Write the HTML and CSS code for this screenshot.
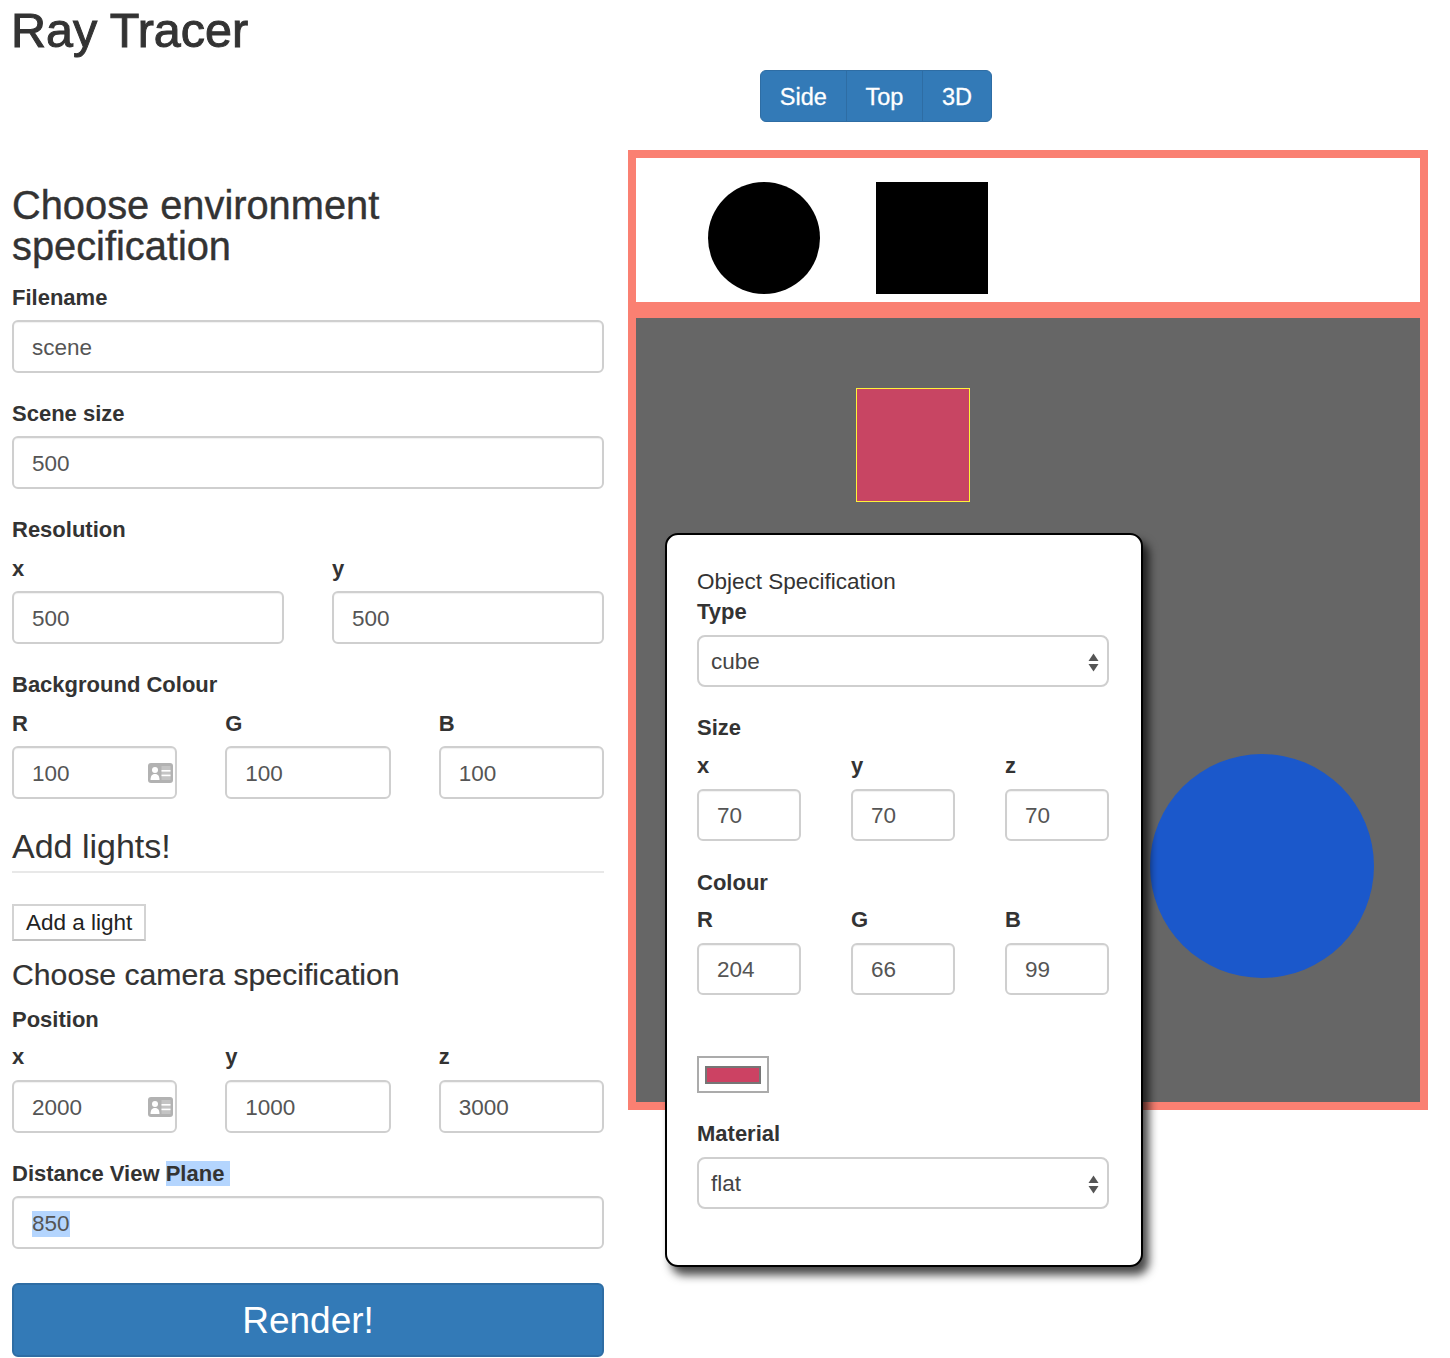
FILE: index.html
```html
<!DOCTYPE html>
<html lang="en">
<head>
<meta charset="utf-8">
<title>Ray Tracer</title>
<link rel="stylesheet" href="styles.css">
</head>
<body>
<div class="page">
  <h1 class="title">Ray Tracer</h1>
  <div class="main">
    <div class="left">
      <h2 class="env-heading">Choose environment specification</h2>

      <div class="group">
        <label class="lbl">Filename</label>
        <input class="field" value="scene">
      </div>

      <div class="group">
        <label class="lbl">Scene size</label>
        <input class="field" value="500">
      </div>

      <div class="group">
        <div class="lbl lbl-head">Resolution</div>
        <div class="cols cols-2">
          <div><div class="lbl">x</div><input class="field" value="500"></div>
          <div><div class="lbl">y</div><input class="field" value="500"></div>
        </div>
      </div>

      <div class="group">
        <div class="lbl lbl-head">Background Colour</div>
        <div class="cols cols-3">
          <div>
            <div class="lbl">R</div>
            <div class="field-wrap">
              <input class="field" value="100">
              <svg class="card-icon" viewBox="0 0 25 20" width="25" height="20"><rect x="0" y="0" width="25" height="20" rx="3" fill="#b2b2b2"/><circle cx="7" cy="7" r="3" fill="#fff"/><path d="M2.5 17 C2.5 12.5 4.5 11 7 11 C9.5 11 11.5 12.5 11.5 17 Z" fill="#fff"/><rect x="13.5" y="3" width="9" height="14" fill="#c4c4c4"/><rect x="13.5" y="7" width="9" height="1.6" fill="#fff"/><rect x="13.5" y="11.6" width="9" height="1.6" fill="#fff"/></svg>
            </div>
          </div>
          <div><div class="lbl">G</div><input class="field" value="100"></div>
          <div><div class="lbl">B</div><input class="field" value="100"></div>
        </div>
      </div>

      <h3 class="lights-heading">Add lights!</h3>
      <button class="add-light">Add a light</button>

      <h4 class="camera-heading">Choose camera specification</h4>

      <div class="group">
        <div class="lbl lbl-head-pos">Position</div>
        <div class="cols cols-3">
          <div>
            <div class="lbl lbl-sub">x</div>
            <div class="field-wrap">
              <input class="field" value="2000">
              <svg class="card-icon" viewBox="0 0 25 20" width="25" height="20"><rect x="0" y="0" width="25" height="20" rx="3" fill="#b2b2b2"/><circle cx="7" cy="7" r="3" fill="#fff"/><path d="M2.5 17 C2.5 12.5 4.5 11 7 11 C9.5 11 11.5 12.5 11.5 17 Z" fill="#fff"/><rect x="13.5" y="3" width="9" height="14" fill="#c4c4c4"/><rect x="13.5" y="7" width="9" height="1.6" fill="#fff"/><rect x="13.5" y="11.6" width="9" height="1.6" fill="#fff"/></svg>
            </div>
          </div>
          <div><div class="lbl lbl-sub">y</div><input class="field" value="1000"></div>
          <div><div class="lbl lbl-sub">z</div><input class="field" value="3000"></div>
        </div>
      </div>

      <div class="group group-last">
        <div class="lbl">Distance View <span class="sel">Plane&nbsp;</span></div>
        <div class="field field-div"><span class="sel">850</span></div>
      </div>

      <button class="render">Render!</button>
    </div>

    <div class="right">
      <div class="view-toggle">
        <button class="vt-btn">Side</button><button class="vt-btn">Top</button><button class="vt-btn">3D</button>
      </div>

      <div class="stage">
        <div class="canvas canvas-top">
          <div class="shape circle-top"></div>
          <div class="shape square-top"></div>
        </div>
        <div class="canvas canvas-main">
          <div class="shape cube"></div>
          <div class="shape sphere"></div>
        </div>

        <div class="popup">
          <div class="popup-title">Object Specification</div>
          <div class="lbl p-lbl">Type</div>
          <div class="select p-type">
            <span>cube</span>
            <svg class="arrows" viewBox="0 0 11 19" width="11" height="19"><path d="M0.5 8 L5.5 0.5 L10.5 8 Z" fill="#555"/><path d="M0.5 11 L5.5 18.5 L10.5 11 Z" fill="#555"/></svg>
          </div>

          <div class="lbl lbl-head-p">Size</div>
          <div class="cols cols-3 p-cols">
            <div><div class="lbl lbl-sub">x</div><input class="field p-field" value="70"></div>
            <div><div class="lbl lbl-sub">y</div><input class="field p-field" value="70"></div>
            <div><div class="lbl lbl-sub">z</div><input class="field p-field" value="70"></div>
          </div>

          <div class="lbl lbl-head-c">Colour</div>
          <div class="cols cols-3 p-cols p-cols-last">
            <div><div class="lbl lbl-sub">R</div><input class="field p-field" value="204"></div>
            <div><div class="lbl lbl-sub">G</div><input class="field p-field" value="66"></div>
            <div><div class="lbl lbl-sub">B</div><input class="field p-field" value="99"></div>
          </div>

          <div class="swatch"><div class="swatch-inner"></div></div>

          <div class="lbl p-lbl">Material</div>
          <div class="select">
            <span>flat</span>
            <svg class="arrows" viewBox="0 0 11 19" width="11" height="19"><path d="M0.5 8 L5.5 0.5 L10.5 8 Z" fill="#555"/><path d="M0.5 11 L5.5 18.5 L10.5 11 Z" fill="#555"/></svg>
          </div>
        </div>
      </div>
    </div>
  </div>
</div>
</body>
</html>
```

FILE: styles.css
```css
* {
  box-sizing: border-box;
}

body {
  margin: 0;
  font-family: "Liberation Sans", Arial, Helvetica, sans-serif;
  color: #333;
  background: #fff;
}

.page {
  padding: 0 12px;
}

.title {
  margin: 0 0 0 -1px;
  padding-top: 4px;
  font-size: 48.5px;
  line-height: 52px;
  font-weight: 400;
  -webkit-text-stroke: 1px #333;
}

.main {
  display: flex;
  gap: 24px;
  align-items: flex-start;
}

.left {
  width: 592px;
  flex: none;
  padding-top: 129px;
}

.right {
  width: 800px;
  flex: none;
  padding-top: 14px;
}

.env-heading {
  margin: 0 0 19px;
  max-width: 540px;
  font-size: 39.8px;
  line-height: 41px;
  font-weight: 400;
  -webkit-text-stroke: 0.4px #333;
}

.lbl {
  display: block;
  font-weight: 700;
  font-size: 22px;
  line-height: 24px;
  margin-bottom: 10px;
  color: #333;
}

.lbl-head {
  margin-bottom: 15px;
}

.lbl-head-pos {
  margin-bottom: 13px;
}

.lbl-sub {
  margin-bottom: 11px;
}

.p-lbl {
  margin-bottom: 11px;
}

.group {
  margin-bottom: 29px;
}

.group-last {
  margin-bottom: 0;
}

.field {
  display: block;
  width: 100%;
  height: 53px;
  border: 2px solid #cfcfcf;
  border-radius: 6px;
  padding: 2px 18px 0;
  font-family: inherit;
  font-size: 22.5px;
  color: #555;
  background: #fff;
  box-shadow: inset 0 1px 1px rgba(0, 0, 0, 0.06);
  outline: none;
}

.field-div {
  display: flex;
  align-items: center;
}

.sel {
  background: #b4d5fe;
}

.cols {
  display: grid;
  column-gap: 48px;
}

.cols-2 {
  grid-template-columns: 1fr 1fr;
}

.cols-3 {
  grid-template-columns: 1fr 1fr 1fr;
}

.field-wrap {
  position: relative;
}

.card-icon {
  position: absolute;
  right: 4px;
  top: 50%;
  margin-top: -10px;
  display: block;
}

.lights-heading {
  margin: 0 0 31px;
  padding-bottom: 7px;
  font-size: 34px;
  line-height: 36px;
  font-weight: 400;
  border-bottom: 2px solid #e8e8e8;
}

.add-light {
  display: block;
  height: 37px;
  padding: 0 12px;
  margin: 0 0 18px;
  border: 2px solid #d3d3d3;
  border-bottom-color: #c2c2c2;
  border-radius: 0;
  background: #fff;
  font-family: inherit;
  font-size: 22.5px;
  color: #222;
}

.camera-heading {
  margin: 0 0 17px;
  font-size: 30.2px;
  line-height: 32px;
  font-weight: 400;
  -webkit-text-stroke: 0.2px #333;
}

.render {
  display: block;
  width: 100%;
  height: 74px;
  margin-top: 34px;
  background: #337ab7;
  border: 2px solid #2e6da4;
  border-radius: 6px;
  color: #fff;
  font-family: inherit;
  font-size: 37px;
  padding: 2px 0 0;
}

/* right column */
.view-toggle {
  display: inline-flex;
  margin-left: 132px;
  height: 52px;
}

.vt-btn {
  height: 52px;
  padding: 2px 18.8px 0;
  margin: 0 0 0 -1px;
  font-family: inherit;
  font-size: 23.5px;
  color: #fff;
  background: #337ab7;
  border: 1px solid #2e6da4;
  border-radius: 0;
  -webkit-text-stroke: 0.3px #fff;
}

.vt-btn:first-child {
  margin-left: 0;
  border-radius: 6px 0 0 6px;
}

.vt-btn:last-child {
  border-radius: 0 6px 6px 0;
}

.stage {
  position: relative;
  margin-top: 28px;
  width: 800px;
}

.canvas {
  position: relative;
  width: 800px;
  border: 8px solid #fa8072;
}

.canvas-top {
  height: 160px;
  background: #fff;
}

.canvas-main {
  height: 800px;
  background: #666;
}

.shape {
  position: absolute;
}

.circle-top {
  left: 72px;
  top: 24px;
  width: 112px;
  height: 112px;
  border-radius: 50%;
  background: #000;
}

.square-top {
  left: 240px;
  top: 24px;
  width: 112px;
  height: 112px;
  background: #000;
}

.cube {
  left: 220px;
  top: 70px;
  width: 114px;
  height: 114px;
  background: #c84563;
  border: 1.5px solid #fff23a;
}

.sphere {
  left: 514px;
  top: 436px;
  width: 224px;
  height: 224px;
  border-radius: 50%;
  background: #1b58cb;
}

.popup {
  position: absolute;
  left: 37px;
  top: 383px;
  width: 478px;
  padding: 35px 32px 56px 30px;
  background: #fff;
  border: 2px solid #000;
  border-radius: 13px;
  box-shadow: 6px 8px 10px rgba(0, 0, 0, 0.72);
}

.popup-title {
  font-size: 22.5px;
  line-height: 24px;
  margin-bottom: 6px;
  color: #333;
}

.select {
  display: flex;
  align-items: center;
  justify-content: space-between;
  height: 52px;
  padding: 2px 8px 0 12px;
  border: 2px solid #cfcfcf;
  border-radius: 8px;
  font-size: 22.5px;
  color: #444;
}

.arrows {
  display: block;
}

.p-type {
  margin-bottom: 29px;
}

.lbl-head-p {
  margin-bottom: 14px;
}

.lbl-head-c {
  margin-bottom: 13px;
}

.p-cols {
  column-gap: 50px;
  margin-bottom: 30px;
}

.p-cols-last {
  margin-bottom: 61px;
}

.p-field {
  height: 52px;
}

.swatch {
  width: 72px;
  height: 37px;
  margin-bottom: 29px;
  padding: 8px 6px 7px;
  border: 2px solid #ababab;
  background: #fff;
}

.swatch-inner {
  height: 100%;
  border: 2px solid #767676;
  background: #cc4263;
}
```
